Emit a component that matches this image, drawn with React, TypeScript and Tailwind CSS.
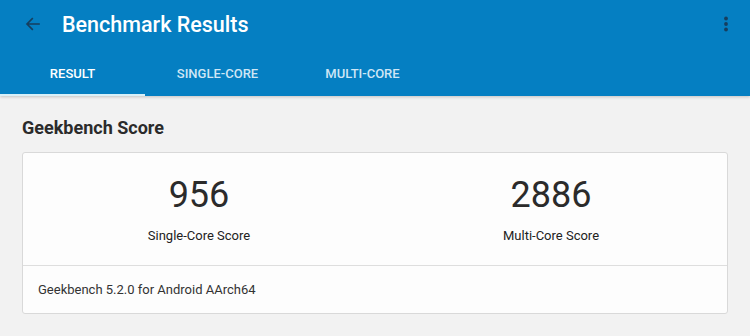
import React from "react";

export default function App() {
  return (
    <div className="w-[750px] h-[336px] bg-[#f2f2f2] overflow-hidden" style={{ fontFamily: "Roboto, 'Liberation Sans', sans-serif" }}>
      <div className="bg-[#057fc2] h-[96px] flex flex-col relative z-10 shadow-[0_1px_3px_rgba(0,0,0,0.2)]">
        <div className="h-[48px] flex items-center">
          <div className="w-[62px] flex items-center pl-[24px]">
            <svg width="18" height="18" viewBox="0 0 24 24" fill="none" stroke="#163e5e" strokeWidth="2.2" strokeLinecap="square">
              <path d="M20 12H5M11 5l-7 7 7 7" />
            </svg>
          </div>
          <div className="text-white text-[21.5px] font-medium flex-1 leading-none pt-[1px]">Benchmark Results</div>
          <div className="w-[56px] flex justify-center pl-[8px]">
            <svg width="6" height="16" viewBox="0 0 6 16" fill="#163e5e">
              <circle cx="3" cy="2.5" r="1.9" />
              <circle cx="3" cy="8" r="1.9" />
              <circle cx="3" cy="13.5" r="1.9" />
            </svg>
          </div>
        </div>
        <div className="h-[48px] flex">
          <div className="w-[145px] relative flex items-center justify-center text-white text-[13px] font-medium pt-[3px]">
            RESULT
            <div className="absolute left-0 right-0 bottom-0 h-[2px] bg-[#d8f0f8]" />
          </div>
          <div className="w-[145px] flex items-center justify-center text-[#cfe6f5] text-[13px] font-medium pt-[3px]">SINGLE-CORE</div>
          <div className="w-[145px] flex items-center justify-center text-[#cfe6f5] text-[13px] font-medium pt-[3px]">MULTI-CORE</div>
        </div>
      </div>
      <div className="px-[22px]">
        <div className="h-[56px] flex items-center text-[18px] font-bold text-[#2b2b2b] pt-[7px]">Geekbench Score</div>
        <div className="bg-[#fdfdfd] border border-[#d9d9d9] rounded-[3px] w-[706px]">
          <div className="h-[113px] grid grid-cols-2 border-b border-[#dedede]">
            <div className="flex flex-col items-center pt-[24px]">
              <div className="text-[36px] leading-none text-[#2b2b2b]">956</div>
              <div className="text-[13px] text-[#222] mt-[13px]">Single-Core Score</div>
            </div>
            <div className="flex flex-col items-center pt-[24px]">
              <div className="text-[36px] leading-none text-[#2b2b2b]">2886</div>
              <div className="text-[13px] text-[#222] mt-[13px]">Multi-Core Score</div>
            </div>
          </div>
          <div className="h-[47px] flex items-center pl-[15px] text-[13px] text-[#333]">Geekbench 5.2.0 for Android AArch64</div>
        </div>
      </div>
    </div>
  );
}
